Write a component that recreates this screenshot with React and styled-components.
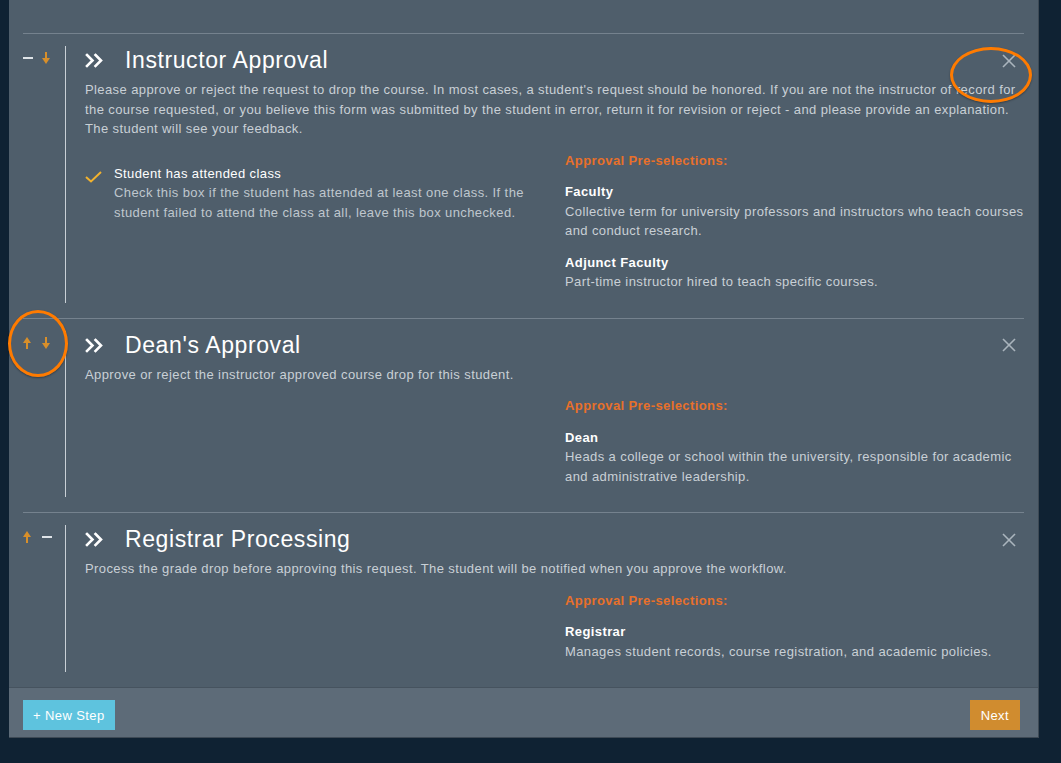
import React from 'react';
import styled, { createGlobalStyle } from 'styled-components';

const GlobalStyle = createGlobalStyle`
  html, body {
    margin: 0;
    padding: 0;
    background: #0f2233;
  }
  body {
    font-family: "Liberation Sans", Arial, sans-serif;
    letter-spacing: 0.4px;
  }
`;

const Page = styled.div`
  padding: 0 22px 26px 9px;
  min-height: 763px;
  box-sizing: border-box;
`;

const Panel = styled.div`
  position: relative;
  width: 1030px;
  background: #4f5e6b;
  border-right: 1px solid #3e4a55;
  border-bottom: 1px solid #3e4a55;
  box-sizing: border-box;
`;

const Body = styled.div`
  padding: 33px 14px 0 14px;
`;

const Section = styled.section`
  display: grid;
  grid-template-columns: 42px 1fr;
  border-top: 1px solid #75828e;
  padding: 12px 0 15px 0;
`;

const Controls = styled.div`
  display: flex;
  align-items: center;
  height: 22px;
  margin-top: 1px;
`;

const ControlSlot = styled.div`
  width: 19px;
  display: flex;
  align-items: center;
`;

const Dash = styled.span`
  display: block;
  width: 10px;
  height: 2px;
  background: #dfe4e8;
`;

const Content = styled.div`
  border-left: 1px solid #c9d0d6;
  padding: 0 0 11px 19px;
`;

const TitleRow = styled.div`
  display: flex;
  align-items: center;
  height: 29px;
`;

const Title = styled.h2`
  margin: 0 0 0 21px;
  font-size: 23px;
  font-weight: 400;
  color: #ffffff;
  flex: 1;
  letter-spacing: 0.6px;
`;

const CloseButton = styled.button`
  background: none;
  border: none;
  padding: 0;
  margin-right: 8px;
  display: flex;
  cursor: pointer;
`;

const Description = styled.p`
  margin: 5px 0 0 0;
  font-size: 13px;
  line-height: 19.5px;
  color: #c9d0d6;
  max-width: 940px;
`;

const Columns = styled.div`
  display: grid;
  grid-template-columns: 480px 1fr;
  margin-top: 12px;
`;

const CheckRow = styled.div`
  display: flex;
  gap: 12px;
  padding-top: 13px;
`;

const CheckMark = styled.div`
  width: 17px;
  padding-top: 5px;
`;

const CheckText = styled.div`
  font-size: 13px;
  line-height: 19.5px;
`;

const Label = styled.div`
  color: #ffffff;
`;

const Hint = styled.div`
  color: #bfc7ce;
  width: 430px;
`;

const PreTitle = styled.div`
  font-size: 13px;
  line-height: 19.5px;
  font-weight: 700;
  color: #e8702a;
`;

const Role = styled.div`
  margin-top: 12px;
  font-size: 13px;
  line-height: 19.5px;
`;

const RoleName = styled.div`
  font-weight: 700;
  color: #ffffff;
`;

const RoleDesc = styled.div`
  color: #c9d0d6;
`;

const Footer = styled.div`
  display: flex;
  justify-content: space-between;
  align-items: flex-start;
  height: 50px;
  box-sizing: border-box;
  padding: 12px 18px 0 14px;
  background: #5d6b78;
  border-top: 1px solid #46535f;
`;

const Button = styled.button`
  height: 30px;
  padding: 0 ${(p) => p.$pad}px;
  border: none;
  background: ${(p) => p.$bg};
  color: #ffffff;
  font-family: "Liberation Sans", Arial, sans-serif;
  font-size: 13px;
  letter-spacing: 0.4px;
  cursor: pointer;
`;

const Annotation = styled.div`
  position: absolute;
  left: ${(p) => p.$left}px;
  top: ${(p) => p.$top}px;
  width: ${(p) => p.$w}px;
  height: ${(p) => p.$h}px;
  border: 3px solid #ff7b00;
  border-radius: 50%;
  box-sizing: border-box;
  box-shadow: 0 1px 2px rgba(0, 0, 0, 0.35);
  pointer-events: none;
`;

const Chevrons = () => (
  <svg width="19" height="15" viewBox="0 0 19 15" fill="none" stroke="#ffffff" strokeWidth="2.6" strokeLinecap="square">
    <polyline points="2,2 7.5,7.5 2,13" />
    <polyline points="10.5,2 16,7.5 10.5,13" />
  </svg>
);

const CloseIcon = () => (
  <svg width="14" height="14" viewBox="0 0 14 14" stroke="#aab4bd" strokeWidth="1.6">
    <line x1="1" y1="1" x2="13" y2="13" />
    <line x1="13" y1="1" x2="1" y2="13" />
  </svg>
);

const Arrow = ({ up }) => (
  <svg width="8" height="12" viewBox="0 0 8 12" fill="#d88f2a" style={{ transform: up ? 'rotate(180deg)' : 'none' }}>
    <rect x="3" y="0" width="2" height="7" />
    <polygon points="0,6 8,6 4,12" />
  </svg>
);

const Check = () => (
  <svg width="17" height="12" viewBox="0 0 17 12" fill="none" stroke="#f2b22e" strokeWidth="2">
    <polyline points="1,6 6,10.5 16,1" />
  </svg>
);

const Control = ({ kind }) => (
  <ControlSlot>
    {kind === 'dash' ? <Dash /> : <Arrow up={kind === 'up'} />}
  </ControlSlot>
);

const steps = [
  {
    title: 'Instructor Approval',
    controls: ['dash', 'down'],
    description:
      "Please approve or reject the request to drop the course. In most cases, a student's request should be honored. If you are not the instructor of record for the course requested, or you believe this form was submitted by the student in error, return it for revision or reject - and please provide an explanation. The student will see your feedback.",
    check: {
      label: 'Student has attended class',
      hint: 'Check this box if the student has attended at least one class. If the student failed to attend the class at all, leave this box unchecked.',
    },
    roles: [
      { name: 'Faculty', desc: 'Collective term for university professors and instructors who teach courses and conduct research.' },
      { name: 'Adjunct Faculty', desc: 'Part-time instructor hired to teach specific courses.' },
    ],
  },
  {
    title: "Dean's Approval",
    controls: ['up', 'down'],
    description: 'Approve or reject the instructor approved course drop for this student.',
    roles: [
      { name: 'Dean', desc: 'Heads a college or school within the university, responsible for academic and administrative leadership.' },
    ],
  },
  {
    title: 'Registrar Processing',
    controls: ['up', 'dash'],
    description: 'Process the grade drop before approving this request. The student will be notified when you approve the workflow.',
    roles: [
      { name: 'Registrar', desc: 'Manages student records, course registration, and academic policies.' },
    ],
  },
];

const Step = ({ step }) => (
  <Section>
    <Controls>
      {step.controls.map((c, i) => (
        <Control key={i} kind={c} />
      ))}
    </Controls>
    <Content>
      <TitleRow>
        <Chevrons />
        <Title>{step.title}</Title>
        <CloseButton aria-label="Remove step">
          <CloseIcon />
        </CloseButton>
      </TitleRow>
      <Description>{step.description}</Description>
      <Columns>
        <div>
          {step.check && (
            <CheckRow>
              <CheckMark>
                <Check />
              </CheckMark>
              <CheckText>
                <Label>{step.check.label}</Label>
                <Hint>{step.check.hint}</Hint>
              </CheckText>
            </CheckRow>
          )}
        </div>
        <div>
          <PreTitle>Approval Pre-selections:</PreTitle>
          {step.roles.map((r) => (
            <Role key={r.name}>
              <RoleName>{r.name}</RoleName>
              <RoleDesc>{r.desc}</RoleDesc>
            </Role>
          ))}
        </div>
      </Columns>
    </Content>
  </Section>
);

export default function App() {
  return (
    <>
      <GlobalStyle />
      <Page>
        <Panel>
          <Body>
            {steps.map((s) => (
              <Step key={s.title} step={s} />
            ))}
          </Body>
          <Footer>
            <Button $bg="#5ec3de" $pad={10}>+ New Step</Button>
            <Button $bg="#d08c2f" $pad={11}>Next</Button>
          </Footer>
          <Annotation $left={941} $top={47} $w={82} $h={56} />
          <Annotation $left={-1} $top={310} $w={60} $h={67} />
        </Panel>
      </Page>
    </>
  );
}
